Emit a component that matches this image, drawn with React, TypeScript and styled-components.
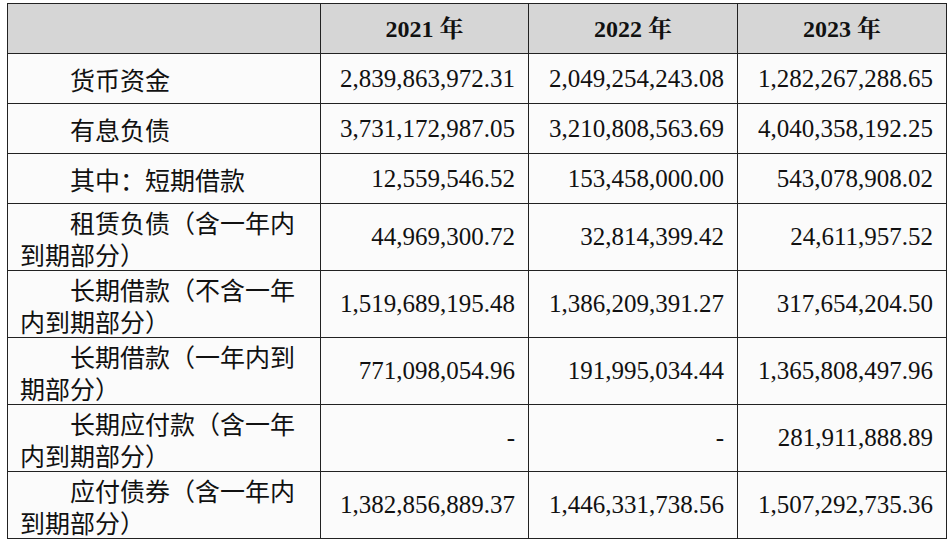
import React from "react";
import styled, { createGlobalStyle } from "styled-components";

const Global = createGlobalStyle`
  html, body { margin: 0; padding: 0; background: #ffffff; }
  #root { width: 950px; height: 544px; }
`;

const Page = styled.div`
  padding: 3px 0 0 7px;
  font-family: "Liberation Serif", "Noto Serif CJK SC", "Noto Sans CJK SC", serif;
  color: #111;
`;

const Table = styled.table`
  border-collapse: collapse;
  table-layout: fixed;
  width: 940px;
  background: #fbfbfb;
  font-size: 25px;
`;

const HeadCell = styled.th`
  background: #d6d6d6;
  border: 1px solid #222;
  height: 49px;
  padding: 0;
  font-size: 24px;
  line-height: 30px;
  font-weight: bold;
  text-align: center;
  vertical-align: middle;
`;

const LabelCell = styled.td<{ $tall?: boolean }>`
  border: 1px solid #222;
  font-family: "Noto Sans CJK SC", sans-serif;
  padding: ${(p) => (p.$tall ? "2px 4px 0 12px" : "0 4px 0 12px")};
  height: ${(p) => (p.$tall ? "64px" : "49px")};
  line-height: 32px;
  text-indent: 2em;
  vertical-align: ${(p) => (p.$tall ? "top" : "middle")};
  text-align: left;
  white-space: nowrap;
  overflow: hidden;
`;

const NumCell = styled.td`
  border: 1px solid #222;
  padding: 0 13px 0 0;
  line-height: 30px;
  text-align: right;
  vertical-align: middle;
  white-space: nowrap;
`;

type Row = { label: string[]; values: string[] };

const rows: Row[] = [
  { label: ["货币资金"], values: ["2,839,863,972.31", "2,049,254,243.08", "1,282,267,288.65"] },
  { label: ["有息负债"], values: ["3,731,172,987.05", "3,210,808,563.69", "4,040,358,192.25"] },
  { label: ["其中：短期借款"], values: ["12,559,546.52", "153,458,000.00", "543,078,908.02"] },
  { label: ["租赁负债（含一年内", "到期部分）"], values: ["44,969,300.72", "32,814,399.42", "24,611,957.52"] },
  { label: ["长期借款（不含一年", "内到期部分）"], values: ["1,519,689,195.48", "1,386,209,391.27", "317,654,204.50"] },
  { label: ["长期借款（一年内到", "期部分）"], values: ["771,098,054.96", "191,995,034.44", "1,365,808,497.96"] },
  { label: ["长期应付款（含一年", "内到期部分）"], values: ["-", "-", "281,911,888.89"] },
  { label: ["应付债券（含一年内", "到期部分）"], values: ["1,382,856,889.37", "1,446,331,738.56", "1,507,292,735.36"] },
];

export default function App() {
  return (
    <>
      <Global />
      <Page>
        <Table>
          <colgroup>
            <col style={{ width: 313 }} />
            <col style={{ width: 208 }} />
            <col style={{ width: 209 }} />
            <col style={{ width: 209 }} />
          </colgroup>
          <thead>
            <tr>
              <HeadCell></HeadCell>
              <HeadCell>2021 年</HeadCell>
              <HeadCell>2022 年</HeadCell>
              <HeadCell>2023 年</HeadCell>
            </tr>
          </thead>
          <tbody>
            {rows.map((r, i) => (
              <tr key={i}>
                <LabelCell $tall={r.label.length > 1}>
                  {r.label.map((l, j) => (
                    <React.Fragment key={j}>
                      {j > 0 && <br />}
                      {l}
                    </React.Fragment>
                  ))}
                </LabelCell>
                {r.values.map((v, k) => (
                  <NumCell key={k}>{v}</NumCell>
                ))}
              </tr>
            ))}
          </tbody>
        </Table>
      </Page>
    </>
  );
}
